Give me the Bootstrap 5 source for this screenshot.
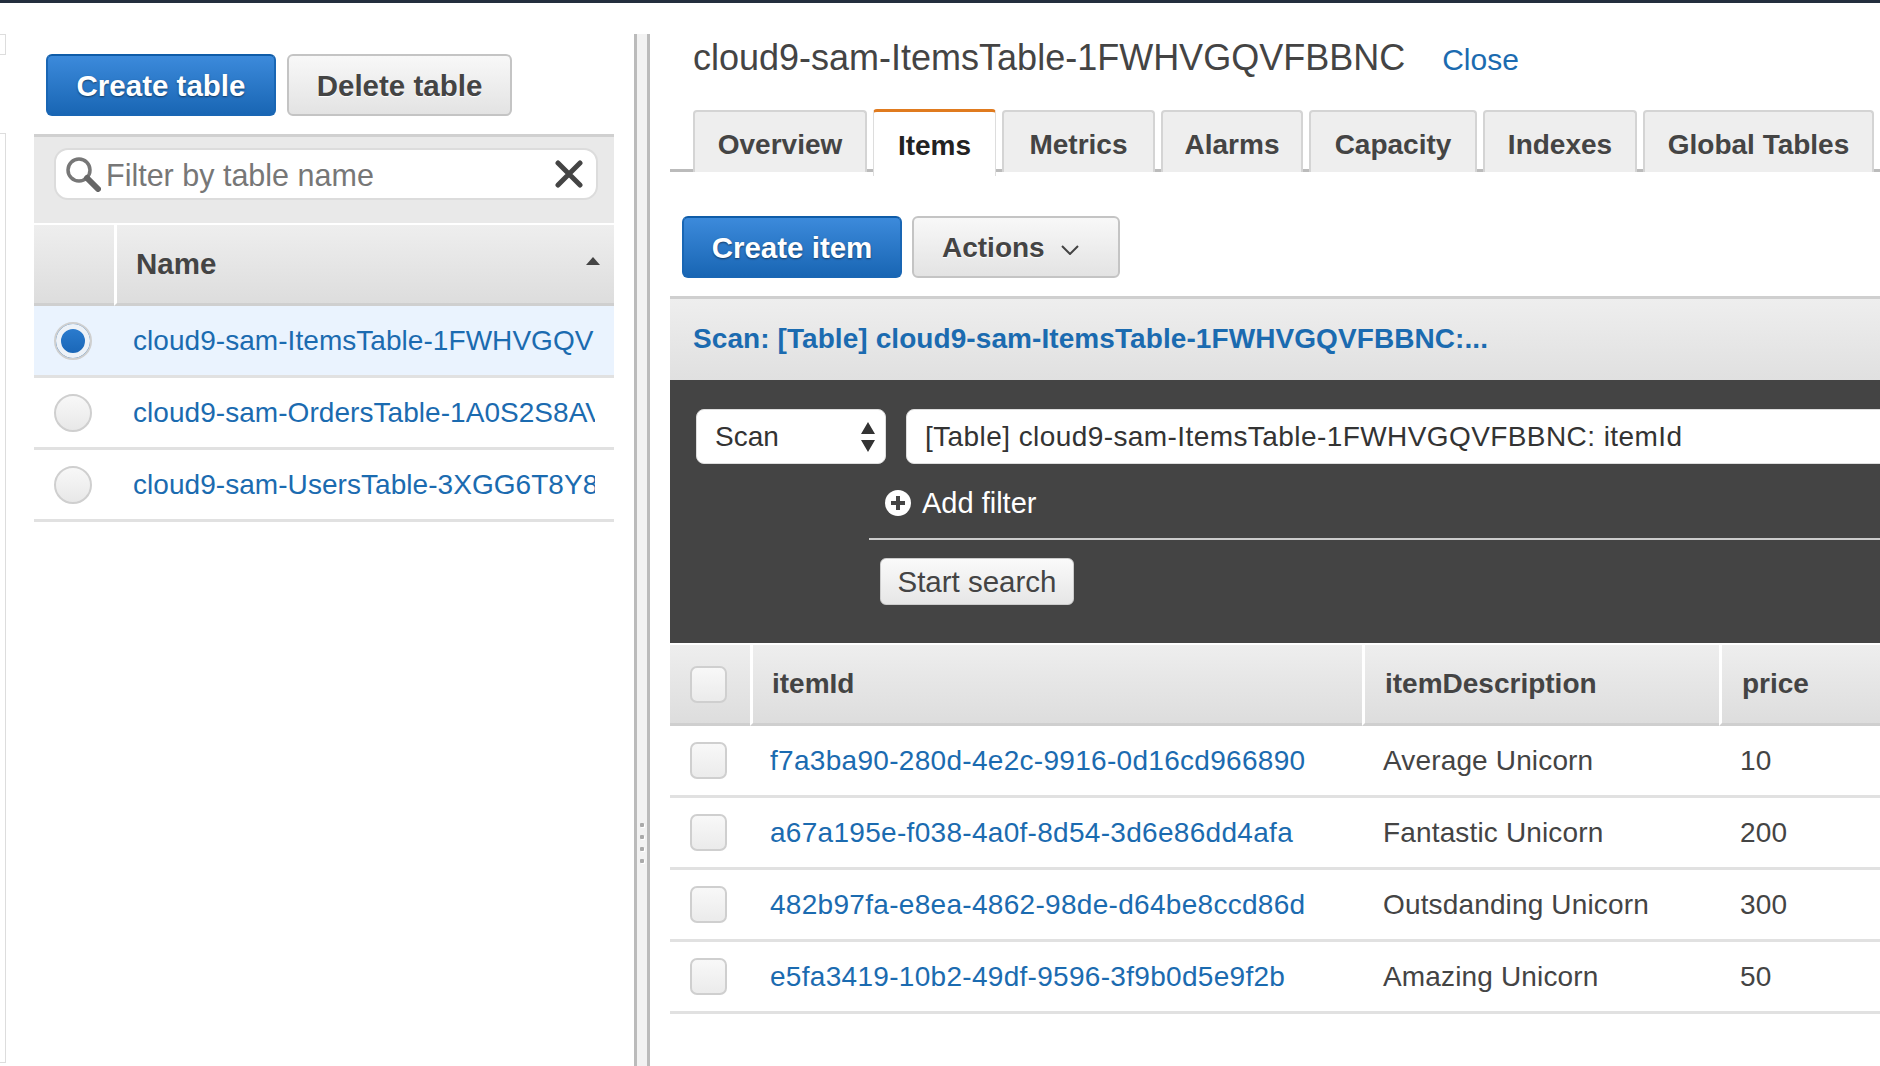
<!DOCTYPE html>
<html lang="en">
<head>
<meta charset="utf-8">
<title>DynamoDB tables</title>
<link rel="stylesheet" href="https://cdn.jsdelivr.net/npm/bootstrap@5.3.0/dist/css/bootstrap.min.css">
<style>
html,body{height:100%;}
body{margin:0;overflow:hidden;background:#fff;color:#444;font-family:"Liberation Sans",Arial,sans-serif;font-size:28px;line-height:1.2;}
a{color:#1b6bb0;text-decoration:none;}
.topstrip{height:3px;background:#232f3e;}
.shell{height:1063px;}
.shell>*{flex:none;}
.rail{width:34px;padding-top:31px;}
.railbox{width:6px;height:21px;background:#fff;border:1px solid #ddd;border-left:0;margin-bottom:78px;}
.railbox-long{height:930px;}
.leftpane{width:580px;padding-top:51px;}
.gapfill{width:20px;}
.splitbar{width:16px;margin-top:31px;background:#f2f2f2;border-left:3px solid #bbb;border-right:3px solid #bbb;padding-top:789px;}
.splitdot{width:4px;height:4px;border-radius:1px;background:#aaa;box-shadow:1px 1px 0 #fff;}
.rightpane{width:1230px;margin-left:20px;overflow:hidden;padding-top:31px;}
.aws-btn{height:62px;font-size:29.5px;font-weight:700;border-radius:6px;padding:2px 0 0;line-height:1;}
.aws-primary,.aws-primary:hover{color:#fff;background:linear-gradient(#3c8adb,#1966b4);border:2px solid #1966b4;border-top-color:#0f5ca8;text-shadow:0 1px 2px rgba(0,0,0,.5);}
.aws-default,.aws-default:hover{color:#444;background:linear-gradient(#f8f8f8,#e3e3e3);border:2px solid #c4c4c4;text-shadow:0 1px 1px #fff;}
.w-create-table{width:230px;}
.w-delete-table{width:225px;}
.w-create-item{width:220px;}
.w-actions{width:208px;font-size:28px;text-align:left;padding-left:28px;}
.btnrow-left{gap:11px;padding-left:12px;margin-bottom:18px;}
.filterpanel{height:89px;background:#e9e9e9;border-top:3px solid #d0d0d0;padding:11px 16px 0 20px;margin-bottom:2px;}
.filterbox{height:52px;background:#fff;border:2px solid #dcdcdc;border-radius:14px;padding:0 13px 0 9px;}
.filterbox input{border:0;outline:0;background:transparent;padding:2px 0 0;margin-left:5px;font-size:30.5px;color:#444;min-width:0;flex:1;font-family:inherit;}
.filterbox input::placeholder{color:#777;opacity:1;}
.awsgrid{table-layout:fixed;border-collapse:separate;border-spacing:0;margin:0;color:#444;}
.awsgrid>:not(caption)>*>*{padding:0;background:transparent;box-shadow:none;border-bottom:3px solid #e1e1e1;vertical-align:middle;color:#444;}
.awsgrid>thead>tr>th{height:81px;background:linear-gradient(#eeeeee,#dddddd);border-bottom:3px solid #cfcfcf;font-weight:700;border-left:3px solid #fff;}
.awsgrid>thead>tr>th:first-child{border-left:0;}
.awsgrid>tbody>tr>td{height:72px;letter-spacing:.15px;}
.awsgrid>tbody>tr.picked>td{background:#eaf3fe;}
.namecell{padding:0 19px 0 19px !important;}
.namelink{display:block;white-space:nowrap;overflow:hidden;letter-spacing:.05px;}
.namehead{padding:0 14px 0 19px !important;font-size:29.5px;}
.sortup{width:0;height:0;border-left:7px solid transparent;border-right:7px solid transparent;border-bottom:8px solid #444;margin-top:-5px;}
.radiocell,.tickcell{text-align:left;}
.radiocell{padding-left:20px !important;}
.tickcell{padding-left:20px !important;}
.awsradio.form-check-input{width:38px;height:38px;margin:0;float:none;display:block;background-image:linear-gradient(#f8f8f8,#e8e8e8);border:2px solid #cfcfcf;}
.awsradio.form-check-input:checked{background-color:#1c6dbd;background-image:linear-gradient(#2e7fd2,#1763b3);border-color:#cfcfcf;box-shadow:inset 0 0 0 5px #edf2f8;}
.awstick.form-check-input{width:37px;height:37px;margin:0;float:none;display:block;border-radius:7px;background-image:linear-gradient(#f8f8f8,#ebebeb);border:2px solid #cfcfcf;}
.tabletitle{gap:37px;padding-left:23px;height:46px;margin-bottom:30px;padding-top:2px;}
.tabletitle h1{font-size:36px;font-weight:400;margin:0;color:#444;line-height:46px;}
.closelink{font-size:30px;margin-top:3px;}
.awstabs{gap:6px;padding-left:23px;height:62px;border-bottom:3px solid #bbb;flex-wrap:nowrap;margin-bottom:44px;}
.awstabs .nav-link{height:62px;margin:0;padding:0;font-size:28px;font-weight:700;color:#444;background:#eee;border:2px solid #d4d4d4;border-bottom:0;border-radius:4px 4px 0 0;text-align:center;line-height:65px;white-space:nowrap;}
.awstabs .nav-link.active{height:67px;margin-top:-1px;color:#222;background:#fff;border:0;border-top:3px solid #e07b1f;border-left:1px solid #ddd;border-right:1px solid #ddd;line-height:67px;position:relative;z-index:1;}
.tabw-overview{width:174px;}
.tabw-items{width:123px;}
.tabw-metrics{width:153px;}
.tabw-alarms{width:142px;}
.tabw-capacity{width:168px;}
.tabw-indexes{width:154px;}
.tabw-global{width:231px;}
.tabw-more{width:60px;}
.btnrow-right{gap:10px;padding-left:12px;margin-bottom:18px;}
.chev{margin-left:16px;}
.scanbar{height:84px;background:linear-gradient(#eeeeee,#e0e0e0);border-top:3px solid #cfcfcf;padding:0 0 2px 23px;font-weight:700;color:#1b6bb0;letter-spacing:.08px;}
.darkpanel{height:263px;background:#444;margin-bottom:2px;color:#fff;padding-top:29px;}
.scanrow{gap:20px;padding-left:26px;margin-bottom:21px;}
.scansel{height:55px;font-size:28px;line-height:1.2;color:#333;background-color:#fff;border:1px solid #ddd;border-radius:8px;padding:0 18px;}
.scan-type{width:190px;flex:none;background-repeat:no-repeat;background-position:right 9px center;background-size:16px 32px;background-image:url("data:image/svg+xml,%3Csvg xmlns='http://www.w3.org/2000/svg' viewBox='0 0 16 32'%3E%3Cpath fill='%23333' d='M8 1l7 12H1zM8 31L1 19h14z'/%3E%3C/svg%3E");}
.scan-target{width:1200px;flex:none;letter-spacing:.42px;}
.addfilter{gap:11px;padding-left:215px;height:36px;margin-bottom:17px;font-size:29px;}
.hairline{height:2px;background:#ccc;margin-left:199px;margin-bottom:18px;}
.startwrap{padding-left:210px;}
.startbtn,.startbtn:hover{width:194px;height:47px;padding:1px 0 0;font-size:29.5px;line-height:1;color:#444;background:linear-gradient(#fafafa,#e6e6e6);border:1px solid #ccc;border-radius:6px;}
.colpad{padding-left:19px !important;}
.colpad-wide{padding-left:20px !important;}
.cellpad{padding-left:20px !important;}
.cellpad-wide{padding-left:21px !important;}
.awsgrid>tbody>tr>td>a.uuid{letter-spacing:.3px;}
</style>
</head>
<body>
<div class="topstrip"></div>
<div class="shell d-flex">
  <div class="rail">
    <div class="railbox"></div>
    <div class="railbox railbox-long"></div>
  </div>
  <div class="leftpane">
    <div class="btnrow-left d-flex">
      <button type="button" class="btn aws-btn aws-primary w-create-table">Create table</button>
      <button type="button" class="btn aws-btn aws-default w-delete-table">Delete table</button>
    </div>
    <div class="filterpanel">
      <div class="filterbox d-flex align-items-center">
        <svg width="36" height="36" viewBox="0 0 36 36" fill="none" aria-hidden="true"><circle cx="14" cy="14" r="11" stroke="#777" stroke-width="3.5" fill="#fff"/><path d="M22 22l11 11" stroke="#666" stroke-width="6" stroke-linecap="round"/></svg>
        <input type="text" placeholder="Filter by table name">
        <svg width="28" height="28" viewBox="0 0 28 28" aria-hidden="true"><path d="M3 3l22 22M25 3L3 25" stroke="#444" stroke-width="5" stroke-linecap="round"/></svg>
      </div>
    </div>
    <table class="table awsgrid">
      <colgroup><col style="width:80px"><col></colgroup>
      <thead>
        <tr><th></th><th class="namehead"><div class="d-flex justify-content-between align-items-center"><span>Name</span><span class="sortup"></span></div></th></tr>
      </thead>
      <tbody>
        <tr class="picked"><td class="radiocell"><input class="form-check-input awsradio" type="radio" name="tbl" checked aria-label="select"></td><td class="namecell"><a class="namelink" href="#">cloud9-sam-ItemsTable-1FWHVGQVFBBNC</a></td></tr>
        <tr><td class="radiocell"><input class="form-check-input awsradio" type="radio" name="tbl" aria-label="select"></td><td class="namecell"><a class="namelink" href="#">cloud9-sam-OrdersTable-1A0S2S8AVKLM</a></td></tr>
        <tr><td class="radiocell"><input class="form-check-input awsradio" type="radio" name="tbl" aria-label="select"></td><td class="namecell"><a class="namelink" href="#">cloud9-sam-UsersTable-3XGG6T8Y8QRS</a></td></tr>
      </tbody>
    </table>
  </div>
  <div class="gapfill"></div>
  <div class="splitbar d-flex flex-column align-items-center gap-2">
    <div class="splitdot"></div><div class="splitdot"></div><div class="splitdot"></div><div class="splitdot"></div>
  </div>
  <div class="rightpane">
    <div class="tabletitle d-flex align-items-center">
      <h1>cloud9-sam-ItemsTable-1FWHVGQVFBBNC</h1>
      <a class="closelink" href="#">Close</a>
    </div>
    <ul class="nav awstabs">
      <li class="nav-item"><a class="nav-link tabw-overview" href="#">Overview</a></li>
      <li class="nav-item"><a class="nav-link active tabw-items" href="#">Items</a></li>
      <li class="nav-item"><a class="nav-link tabw-metrics" href="#">Metrics</a></li>
      <li class="nav-item"><a class="nav-link tabw-alarms" href="#">Alarms</a></li>
      <li class="nav-item"><a class="nav-link tabw-capacity" href="#">Capacity</a></li>
      <li class="nav-item"><a class="nav-link tabw-indexes" href="#">Indexes</a></li>
      <li class="nav-item"><a class="nav-link tabw-global" href="#">Global Tables</a></li>
      <li class="nav-item"><a class="nav-link tabw-more" href="#" aria-label="More"></a></li>
    </ul>
    <div class="btnrow-right d-flex">
      <button type="button" class="btn aws-btn aws-primary w-create-item">Create item</button>
      <button type="button" class="btn aws-btn aws-default w-actions">Actions<svg class="chev" width="18" height="10" viewBox="0 0 18 10" fill="none" aria-hidden="true"><path d="M1 1l8 8 8-8" stroke="#444" stroke-width="2"/></svg></button>
    </div>
    <div class="scanbar d-flex align-items-center">Scan: [Table] cloud9-sam-ItemsTable-1FWHVGQVFBBNC:...</div>
    <div class="darkpanel">
      <div class="scanrow d-flex">
        <div class="scansel scan-type d-flex align-items-center">Scan</div>
        <div class="scansel scan-target d-flex align-items-center">[Table] cloud9-sam-ItemsTable-1FWHVGQVFBBNC: itemId</div>
      </div>
      <div class="addfilter d-flex align-items-center">
        <svg width="26" height="26" viewBox="0 0 26 26" aria-hidden="true"><circle cx="13" cy="13" r="13" fill="#fff"/><path d="M13 6v14M6 13h14" stroke="#444" stroke-width="4"/></svg>
        <span>Add filter</span>
      </div>
      <div class="hairline"></div>
      <div class="startwrap"><button type="button" class="btn startbtn">Start search</button></div>
    </div>
    <table class="table awsgrid">
      <colgroup><col style="width:80px"><col style="width:612px"><col style="width:357px"><col style="width:181px"></colgroup>
      <thead>
        <tr>
          <th class="tickcell"><input class="form-check-input awstick" type="checkbox" aria-label="all"></th>
          <th class="colpad">itemId</th>
          <th class="colpad-wide">itemDescription</th>
          <th class="colpad-wide">price</th>
        </tr>
      </thead>
      <tbody>
        <tr><td class="tickcell"><input class="form-check-input awstick" type="checkbox" aria-label="row"></td><td class="cellpad"><a class="uuid" href="#">f7a3ba90-280d-4e2c-9916-0d16cd966890</a></td><td class="cellpad-wide">Average Unicorn</td><td class="cellpad-wide">10</td></tr>
        <tr><td class="tickcell"><input class="form-check-input awstick" type="checkbox" aria-label="row"></td><td class="cellpad"><a class="uuid" href="#">a67a195e-f038-4a0f-8d54-3d6e86dd4afa</a></td><td class="cellpad-wide">Fantastic Unicorn</td><td class="cellpad-wide">200</td></tr>
        <tr><td class="tickcell"><input class="form-check-input awstick" type="checkbox" aria-label="row"></td><td class="cellpad"><a class="uuid" href="#">482b97fa-e8ea-4862-98de-d64be8ccd86d</a></td><td class="cellpad-wide">Outsdanding Unicorn</td><td class="cellpad-wide">300</td></tr>
        <tr><td class="tickcell"><input class="form-check-input awstick" type="checkbox" aria-label="row"></td><td class="cellpad"><a class="uuid" href="#">e5fa3419-10b2-49df-9596-3f9b0d5e9f2b</a></td><td class="cellpad-wide">Amazing Unicorn</td><td class="cellpad-wide">50</td></tr>
      </tbody>
    </table>
  </div>
</div>
<script src="https://cdn.jsdelivr.net/npm/bootstrap@5.3.0/dist/js/bootstrap.bundle.min.js"></script>
</body>
</html>
